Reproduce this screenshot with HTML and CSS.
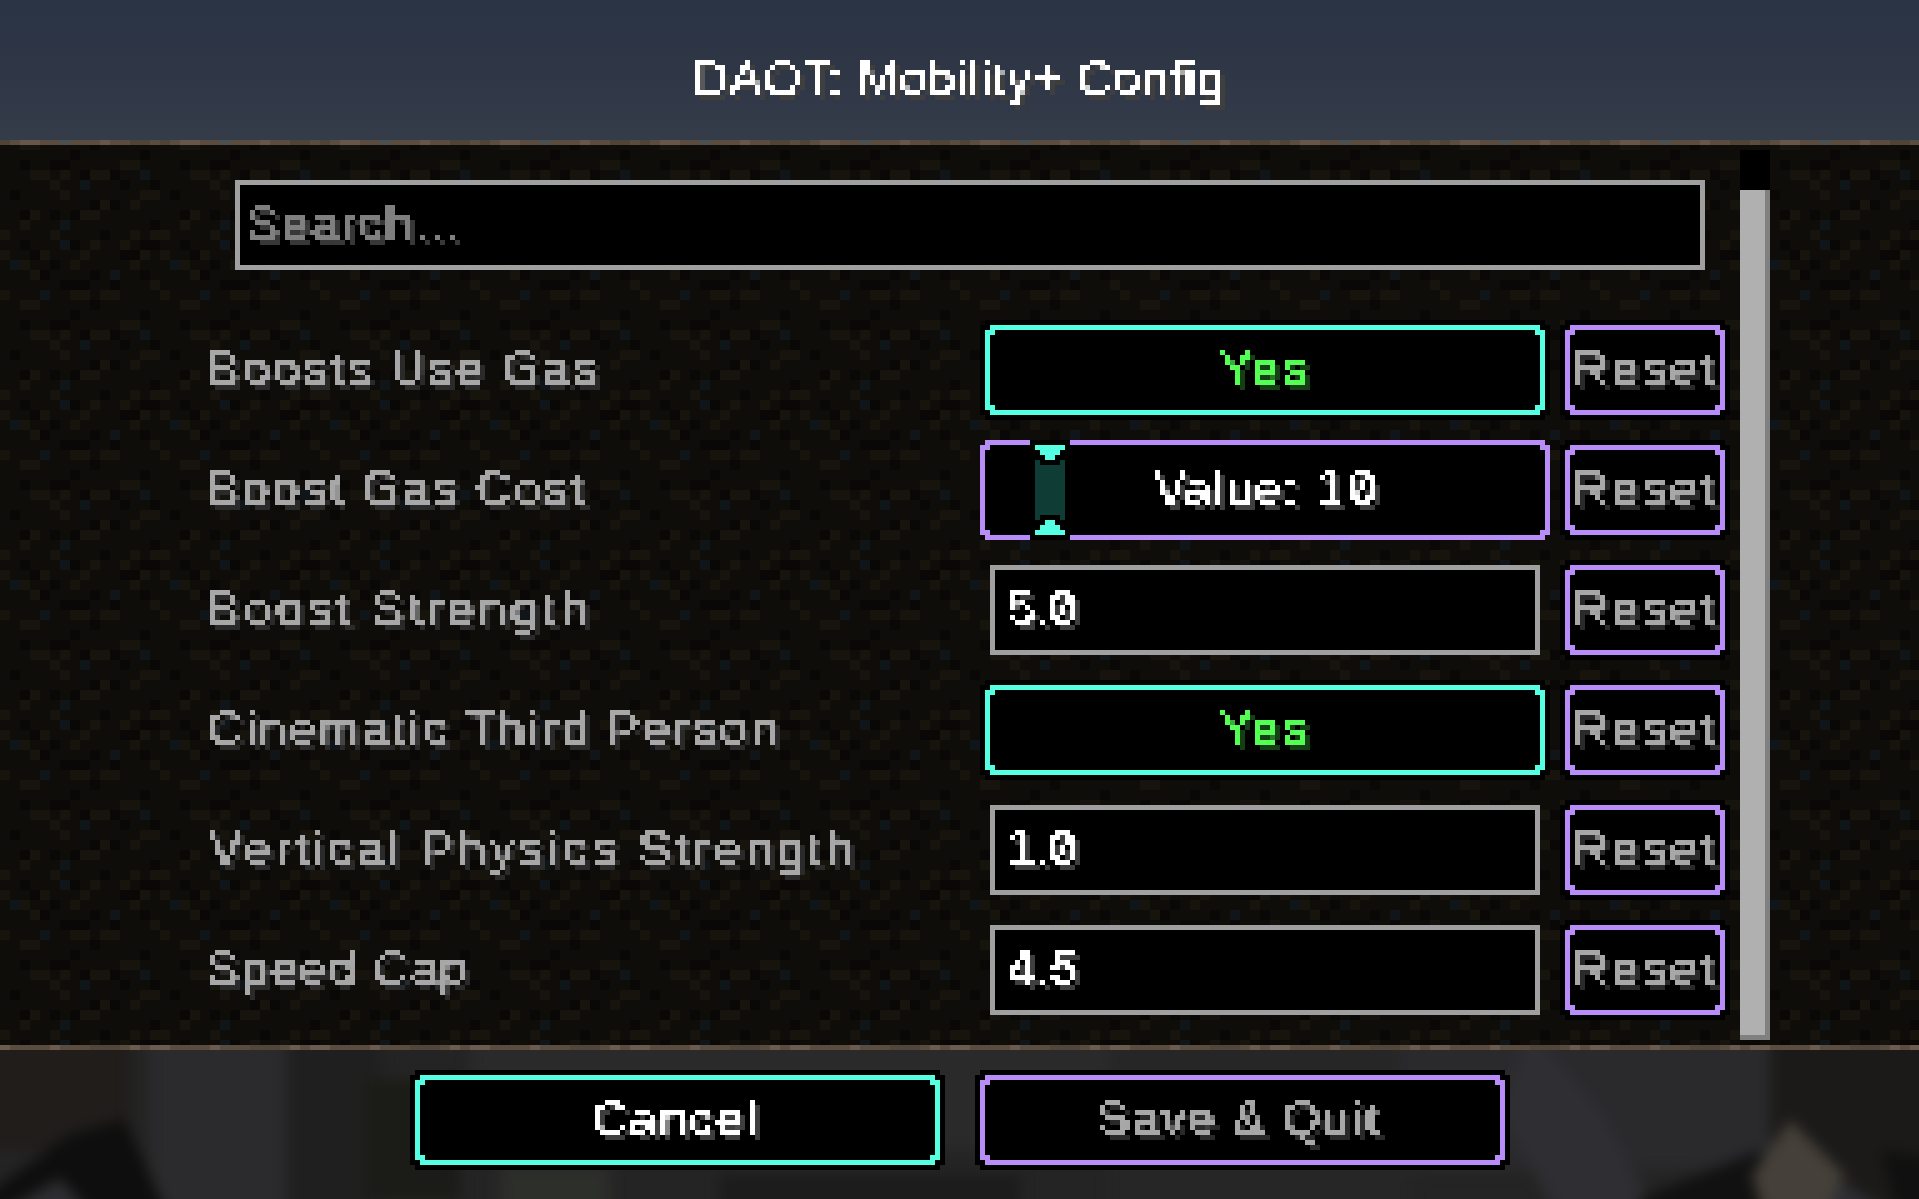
FILE: index.html
```html
<!DOCTYPE html>
<html lang="en">
<head>
<meta charset="utf-8">
<title>DAOT: Mobility+ Config</title>
<link rel="stylesheet" href="styles.css">
</head>
<body>
<svg class="defs" width="0" height="0" aria-hidden="true">
  <defs>
    <filter id="px" x="0" y="0" width="100%" height="100%" color-interpolation-filters="sRGB">
      <feFlood x="2" y="2" width="1" height="1" flood-color="#000"/>
      <feComposite width="5" height="5"/>
      <feTile result="grid"/>
      <feComposite in="SourceGraphic" in2="grid" operator="in"/>
      <feMorphology operator="dilate" radius="2"/>
      <feComponentTransfer>
        <feFuncA type="discrete" tableValues="0 1"/>
      </feComponentTransfer>
    </filter>
    <pattern id="dirt" x="20" y="145" width="160" height="160" patternUnits="userSpaceOnUse">
      <rect width="160" height="160" fill="#0f0d09"/>
      <path fill="#17130d" d="M50 0h20v10h-20zM80 0h20v10h-20zM140 0h10v10h-10zM0 10h20v10h-20zM100 30h20v10h-20zM10 40h20v10h-20zM40 40h10v10h-10zM70 40h20v10h-20zM30 50h10v10h-10zM40 60h10v10h-10zM120 60h20v10h-20zM80 70h10v10h-10zM110 70h10v10h-10zM10 80h10v10h-10zM60 80h20v10h-20zM0 90h10v10h-10zM30 100h10v10h-10zM110 100h10v10h-10zM130 100h20v10h-20zM70 110h10v10h-10zM100 110h10v10h-10zM20 120h10v10h-10zM60 120h10v10h-10zM120 120h10v10h-10zM140 120h10v10h-10zM0 130h10v10h-10zM50 130h10v10h-10zM110 130h10v10h-10zM10 140h10v10h-10zM130 150h10v10h-10z"/>
      <path fill="#0a0806" d="M70 10h10v10h-10zM50 20h10v10h-10zM120 20h10v10h-10zM0 30h10v10h-10zM30 30h20v10h-20zM60 40h10v10h-10zM90 40h10v10h-10zM100 50h10v10h-10zM130 50h10v10h-10zM150 60h10v10h-10zM70 70h10v10h-10zM90 70h10v10h-10zM0 80h10v10h-10zM30 80h10v10h-10zM50 80h10v10h-10zM130 90h10v10h-10zM80 100h10v10h-10zM0 110h10v10h-10zM50 110h10v10h-10zM120 110h20v10h-20zM10 120h10v10h-10zM100 120h20v10h-20zM30 130h10v10h-10zM20 140h10v10h-10zM70 140h10v10h-10zM120 140h10v10h-10zM40 150h30v10h-30zM90 150h10v10h-10z"/>
      <path fill="#10151a" d="M20 0h10v10h-10zM120 40h10v10h-10zM60 50h10v10h-10zM40 90h10v10h-10zM40 110h10v10h-10zM150 130h10v10h-10zM90 140h10v10h-10z"/>
    </pattern>
    <pattern id="edge-top" width="160" height="5" patternUnits="userSpaceOnUse">
      <rect width="160" height="5" fill="#5a4c3f"/>
      <path fill="#66574a" d="M20 0h20v5h-20zM100 0h10v5h-10z"/>
      <path fill="#4f4438" d="M0 0h10v5h-10zM130 0h20v5h-20z"/>
      <path fill="#4c4f50" d="M60 0h10v5h-10z"/>
    </pattern>
    <pattern id="edge-bottom" width="160" height="5" patternUnits="userSpaceOnUse">
      <rect width="160" height="5" fill="#5a4c3f"/>
      <path fill="#6b5c4e" d="M50 0h10v5h-10zM130 0h10v5h-10zM150 0h10v5h-10zM0 0h10v5h-10z"/>
      <path fill="#52463a" d="M90 0h30v5h-30z"/>
    </pattern>
    <filter id="soft" x="-5%" y="-20%" width="110%" height="140%" color-interpolation-filters="sRGB">
      <feGaussianBlur stdDeviation="7"/>
    </filter>
  </defs>
</svg>

<header class="title">
  <div class="tx white ls-title">DAOT: Mobility+ Config</div>
</header>

<svg class="edge" width="1920" height="5" aria-hidden="true"><rect width="1920" height="5" fill="url(#edge-top)"/></svg>

<main class="panel">
  <svg class="dirt" width="1920" height="900" aria-hidden="true"><rect width="1920" height="900" fill="url(#dirt)"/></svg>
  <div class="list">
    <div class="search"><div class="tx hint ls-search">Search...</div></div>

    <div class="row">
      <div class="tx gray name ls-a">Boosts Use Gas</div>
      <div class="control">
        <div class="btn"><div class="ring cyan"><div class="core"><div class="tx yes center ls-yes">Yes</div></div></div></div>
      </div>
      <div class="btn reset"><div class="ring purple"><div class="core"><div class="tx gray center ls-reset">Reset</div></div></div></div>
    </div>

    <div class="row">
      <div class="tx gray name ls-b">Boost Gas Cost</div>
      <div class="control">
        <div class="slider ring purple">
          <div class="core"><div class="tx white center ls-value">Value: <span class="num">10</span></div></div>
          <svg class="handle" width="40" height="100" aria-hidden="true">
            <rect width="40" height="100" fill="#000"/>
            <path fill="#0f3d35" d="M5 20h5v5h20v-5h5v60h-5v-5h-20v5h-5z"/>
            <path fill="#55ffe1" d="M5 5h30v5h-5v5h-5v5h-10v-5h-5v-5h-5zM15 80h10v5h5v5h5v5h-30v-5h5v-5h5z"/>
          </svg>
        </div>
      </div>
      <div class="btn reset"><div class="ring purple"><div class="core"><div class="tx gray center ls-reset">Reset</div></div></div></div>
    </div>

    <div class="row">
      <div class="tx gray name ls-c">Boost Strength</div>
      <div class="control">
        <div class="field"><div class="tx white num ls-num">5.0</div></div>
      </div>
      <div class="btn reset"><div class="ring purple"><div class="core"><div class="tx gray center ls-reset">Reset</div></div></div></div>
    </div>

    <div class="row">
      <div class="tx gray name ls-d">Cinematic Third Person</div>
      <div class="control">
        <div class="btn"><div class="ring cyan"><div class="core"><div class="tx yes center ls-yes">Yes</div></div></div></div>
      </div>
      <div class="btn reset"><div class="ring purple"><div class="core"><div class="tx gray center ls-reset">Reset</div></div></div></div>
    </div>

    <div class="row">
      <div class="tx gray name ls-e">Vertical Physics Strength</div>
      <div class="control">
        <div class="field"><div class="tx white num ls-num">1.0</div></div>
      </div>
      <div class="btn reset"><div class="ring purple"><div class="core"><div class="tx gray center ls-reset">Reset</div></div></div></div>
    </div>

    <div class="row">
      <div class="tx gray name ls-f">Speed Cap</div>
      <div class="control">
        <div class="field"><div class="tx white num ls-num">4.5</div></div>
      </div>
      <div class="btn reset"><div class="ring purple"><div class="core"><div class="tx gray center ls-reset">Reset</div></div></div></div>
    </div>
  </div>
  <div class="scrollbar"><div class="thumb"></div></div>
</main>

<svg class="edge" width="1920" height="5" aria-hidden="true"><rect width="1920" height="5" fill="url(#edge-bottom)"/></svg>

<footer class="footer">
  <svg class="world" width="1920" height="149" viewBox="0 0 1920 149" aria-hidden="true">
    <rect width="1920" height="149" fill="#242424"/>
    <g filter="url(#soft)">
      <path fill="#201d1b" d="M-20-20h150v120h-150z"/>
      <path fill="#2b2b2d" d="M150-20h135v190h-135z"/>
      <path fill="#0e0e0e" d="M-20 149L70 85L125 70L170 170H-20z"/>
      <path fill="#2e2e32" d="M-10 170L60 128L95 170z"/>
      <path fill="#1f1f1f" d="M290-20h90v190h-90z"/>
      <path fill="#1b1c17" d="M365 30h95v120h-95z"/>
      <path fill="#2a2a2b" d="M470-20h640v120h-640z"/>
      <path fill="#2d2f2b" d="M500 115h110v55h-110z"/>
      <path fill="#1c1c1c" d="M720 125h300v45h-300z"/>
      <path fill="#262626" d="M1110-20h300v190h-300z"/>
      <path fill="#2a2a2d" d="M1400-20h370v140h-370z"/>
      <path fill="#2f2f33" d="M1530-20L1600 60L1660 170H1560L1500 60z"/>
      <path fill="#1b1a18" d="M1770-20h170v190h-170z"/>
      <path fill="#111" d="M1640 149L1760 100L1780 170H1640z"/>
      <path fill="#454039" d="M1790 70L1845 125L1830 170H1765L1752 125z"/>
      <path fill="#2e2e33" d="M1840 130L1900 170H1825z"/>
      <path fill="#101010" d="M1880 100L1940 110V170H1900z"/>
    </g>
  </svg>
  <div class="actions">
    <div class="btn wide"><div class="ring cyan"><div class="core"><div class="tx white center ls-cancel">Cancel</div></div></div></div>
    <div class="btn wide"><div class="ring purple"><div class="core"><div class="tx gray center ls-save">Save &amp; Quit</div></div></div></div>
  </div>
</footer>
</body>
</html>
```
FILE: styles.css
```css
html { overflow: hidden; background: #000; }
body {
  margin: 0;
  width: 1920px;
  height: 1199px;
  overflow: hidden;
  font-family: "Liberation Sans", Arial, sans-serif;
}
.defs { position: absolute; }

/* pixel text: real text sampled on the 5px GUI grid */
.tx {
  height: 50px;
  line-height: 46px;
  font-size: 49px;
  white-space: pre;
  filter: url(#px);
  -webkit-text-stroke: 1px currentColor;
  box-sizing: border-box;
}
.num { font-family: Inter, "Liberation Sans", sans-serif; font-size: 48px; font-feature-settings: "zero", "tnum"; }
.white { color: #fff; text-shadow: 5px 5px 0 #3f3f3f; }
.gray { color: #a8a8a8; text-shadow: 5px 5px 0 #2a2a2a; }
.hint { color: #808080; text-shadow: 5px 5px 0 #383838; }
.yes { color: #55ff55; text-shadow: 5px 5px 0 #153f15; }
.center { text-align: center; width: 100%; }

.ls-title { letter-spacing: 1.1px; text-align: center; padding-right: 2px; }
.ls-search { letter-spacing: 1.9px; padding-left: 2px; }
.ls-a { letter-spacing: 2.8px; }
.ls-b { letter-spacing: 2.6px; }
.ls-c { letter-spacing: 4.3px; }
.ls-d { letter-spacing: 2.8px; }
.ls-e { letter-spacing: 4.26px; }
.ls-f { letter-spacing: 1.75px; }
.ls-yes { letter-spacing: 4px; }
.ls-reset { letter-spacing: 3.4px; }
.ls-value { letter-spacing: 1.6px; padding-left: 3px; }
.ls-cancel { letter-spacing: 2.4px; padding-right: 5px; }
.ls-save { letter-spacing: 1.9px; padding-right: 8px; }
.ls-num { letter-spacing: -1px; }

.title {
  height: 140px;
  padding-top: 55px;
  box-sizing: border-box;
  background: linear-gradient(#2a3344, #343b49);
}
.edge { display: block; }

.panel {
  position: relative;
  height: 900px;
  display: flex;
  align-items: flex-start;
  background: #0f0d09;
}
.dirt { position: absolute; left: 0; top: 0; }
.list {
  position: relative;
  width: 1525px;
  box-sizing: border-box;
  margin-left: 205px;
  padding-top: 35px;
}
.search {
  box-sizing: border-box;
  margin: 0 0 55px 30px;
  width: 1470px;
  height: 90px;
  padding: 15px 5px 0 5px;
  border: 5px solid #a0a0a0;
  background: #000;
}
.row {
  display: flex;
  align-items: center;
  height: 90px;
  margin-bottom: 30px;
}
.name { flex: 0 0 775px; padding-left: 2px; }
.ls-e { padding-left: 4px; }
.control { flex: 0 0 570px; display: flex; justify-content: center; align-items: center; height: 90px; }

/* stepped-corner frames */
.btn, .ring, .core {
  clip-path: polygon(5px 0, calc(100% - 5px) 0, calc(100% - 5px) 5px, 100% 5px, 100% calc(100% - 5px), calc(100% - 5px) calc(100% - 5px), calc(100% - 5px) 100%, 5px 100%, 5px calc(100% - 5px), 0 calc(100% - 5px), 0 5px, 5px 5px);
}
.btn { width: 570px; height: 100px; padding: 5px; box-sizing: border-box; background: #000; flex: none; }
.ring { height: 100%; padding: 5px; box-sizing: border-box; }
.core { height: 100%; background: #000; display: flex; align-items: center; }
.cyan { background: #55ffe1; }
.purple { background: #b98df7; }
.reset { width: 170px; margin-left: 10px; }

.slider { position: relative; width: 570px; height: 100px; flex: none; }
.handle { position: absolute; left: 50px; top: 0; }

.field {
  box-sizing: border-box;
  width: 550px;
  height: 90px;
  padding: 15px 5px;
  border: 5px solid #a0a0a0;
  background: #000;
}
.field .tx { padding-left: 6px; }

.scrollbar {
  position: relative;
  width: 30px;
  height: 890px;
  margin: 5px 0 0 10px;
  padding-top: 40px;
  box-sizing: border-box;
  background: #000;
}
.thumb {
  height: 850px;
  background: #808080;
  box-sizing: border-box;
  position: relative;
}
.thumb::before {
  content: "";
  display: block;
  width: 25px;
  height: 845px;
  background: #b0b0b0;
}

.footer { position: relative; height: 149px; }
.world { position: absolute; left: 0; top: 0; }
.actions {
  position: relative;
  display: flex;
  gap: 30px;
  padding: 20px 0 0 410px;
}
.wide { width: 535px; }
```
